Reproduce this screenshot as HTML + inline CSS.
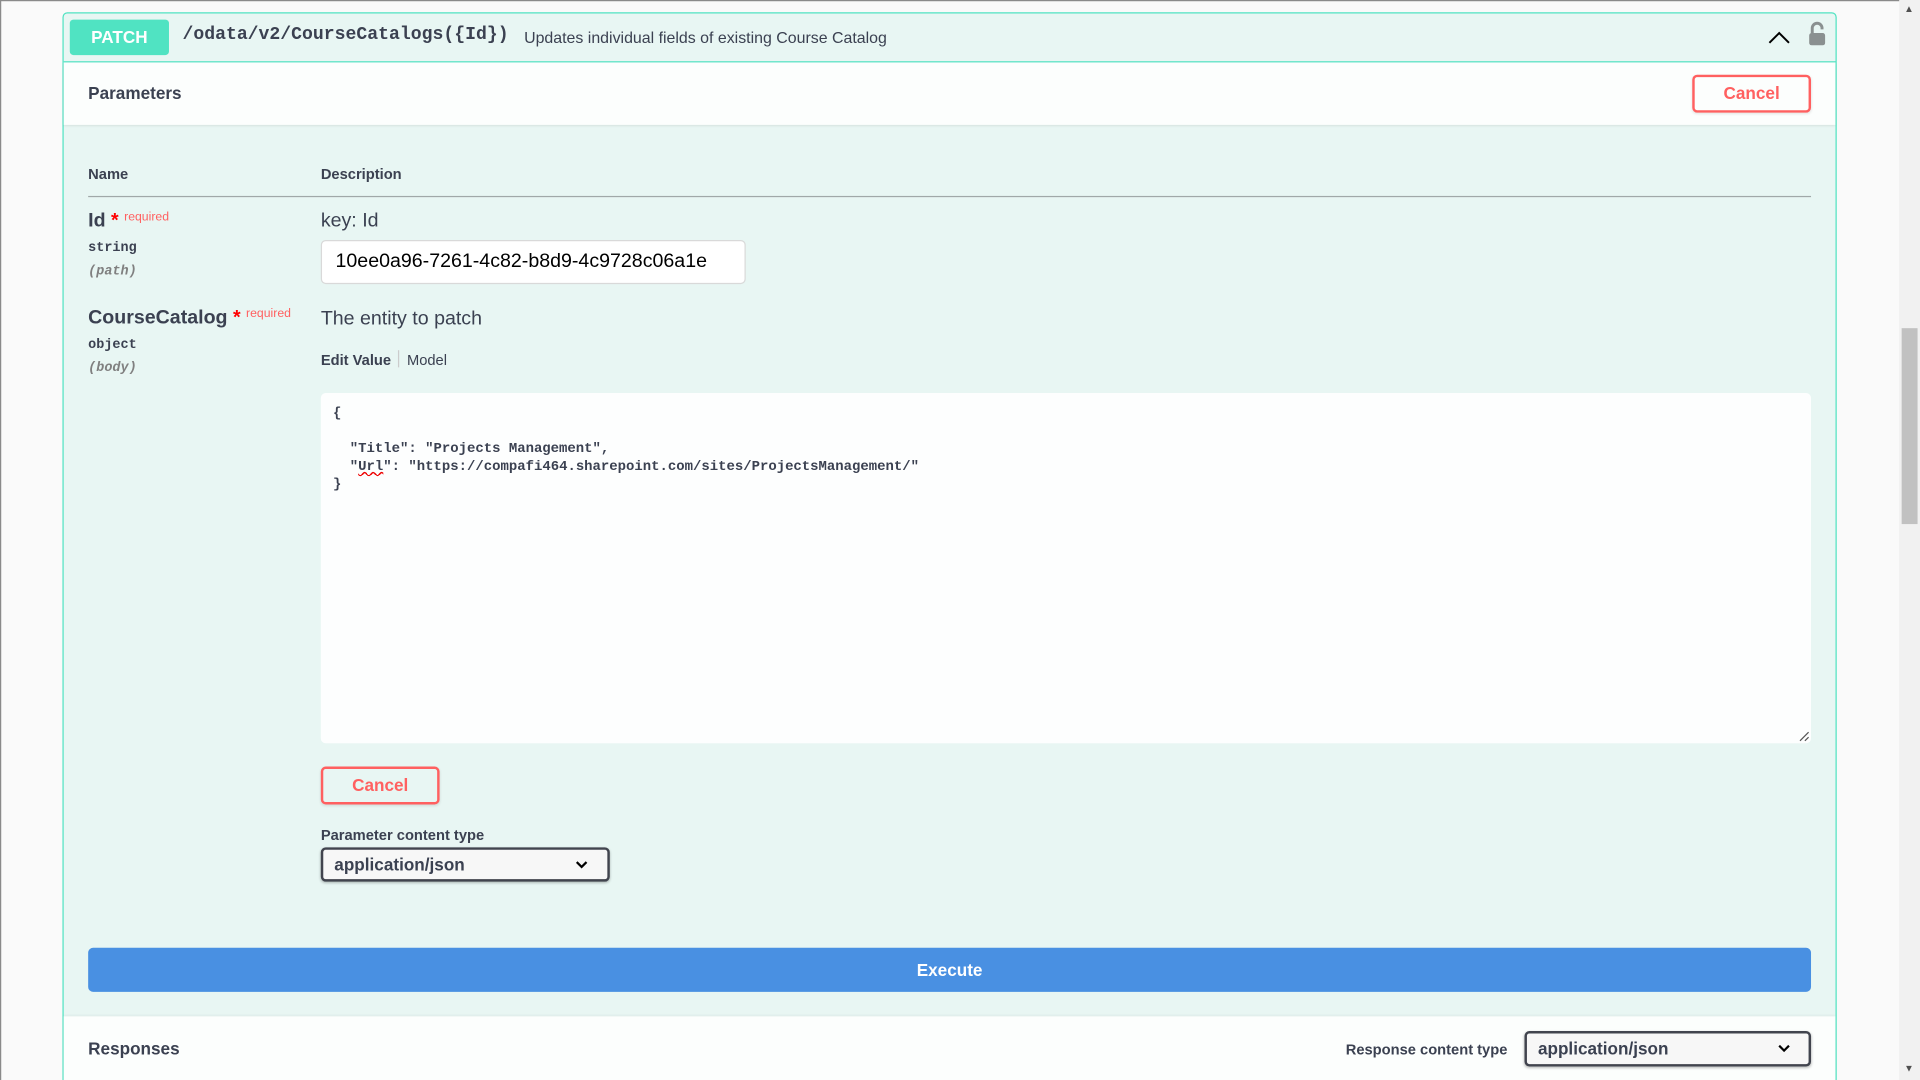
<!DOCTYPE html>
<html><head><meta charset="utf-8"><style>
html,body{margin:0;padding:0;width:1920px;height:1080px;overflow:hidden;background:#fafafa}
#w{position:absolute;left:0;top:0;width:1568px;height:882px;overflow:hidden;transform:scale(1.22449);transform-origin:0 0;font-family:"Liberation Sans",sans-serif;color:#3b4151}
.a{position:absolute}
.mono{font-family:"Liberation Mono","DejaVu Sans Mono",monospace}
.btnc{position:absolute;border:2px solid #ff6060;border-radius:4px;color:#ff6060;font-weight:bold;font-size:14px;text-align:center;box-sizing:border-box;background:transparent;box-shadow:0 1px 2px rgba(0,0,0,.1)}
.sel{position:absolute;box-sizing:border-box;border:2px solid #41444e;border-radius:4px;background:#f7f7f7;font-weight:bold;font-size:14px;padding-left:9px;box-shadow:0 1px 2px rgba(0,0,0,.25)}
.ast{color:#f00;font-size:16px}
</style></head><body><div id="w">
<div class="a" style="left:0;top:0;width:1568px;height:1px;background:#8a8a8a"></div>
<div class="a" style="left:0;top:0;width:1px;height:882px;background:#8a8a8a"></div>
<div class="a" style="left:1551px;top:0;width:17px;height:882px;background:#f1f1f1"></div>
<div class="a" style="left:1553px;top:268px;width:13px;height:160px;background:#c1c1c1"></div>
<div class="a" style="left:1555px;top:3px;font-size:8px;color:#505050">▲</div>
<div class="a" style="left:1555px;top:868px;font-size:8px;color:#505050">▼</div>

<div class="a" style="left:51px;top:10px;width:1447px;height:900px;border:1px solid #50e3c2;border-radius:4px;background:#e8f6f3"></div>
<div class="a" style="left:52px;top:50px;width:1447px;height:1px;background:#50e3c2"></div>
<div class="a" style="left:57px;top:16px;width:81px;height:29px;background:#50e3c2;border-radius:3px;color:#fff;font-weight:bold;font-size:14px;line-height:29px;text-align:center">PATCH</div>
<div class="a mono" style="left:149px;top:21px;font-size:14.8px;font-weight:bold;color:#3b4151">/odata/v2/CourseCatalogs({Id})</div>
<div class="a" style="left:428px;top:23px;font-size:13px;color:#3b4151">Updates individual fields of existing Course Catalog</div>
<svg class="a" style="left:1443px;top:23px" width="20" height="14"><path d="M2 12 L10 4 L18 12" fill="none" stroke="#000" stroke-width="1.6"/></svg>
<svg class="a" style="left:1476px;top:17px" width="16" height="22"><path d="M4 10 V6 a4 4 0 0 1 8 0 V7" fill="none" stroke="#8a9090" stroke-width="2.4"/><rect x="1.5" y="10" width="13" height="10" rx="2" fill="#8a9090"/></svg>

<div class="a" style="left:52px;top:51px;width:1447px;height:51px;background:#fcfefd;box-shadow:0 1px 2px rgba(0,0,0,.1)"></div>
<div class="a" style="left:72px;top:68px;font-size:14px;font-weight:bold">Parameters</div>
<div class="btnc" style="left:1382px;top:61px;width:97px;height:31px;line-height:27px">Cancel</div>

<div class="a" style="left:72px;top:135px;font-size:12px;font-weight:bold">Name</div>
<div class="a" style="left:262px;top:135px;font-size:12px;font-weight:bold">Description</div>
<div class="a" style="left:72px;top:160px;width:1407px;height:1px;background:#a0a8a8"></div>

<div class="a" style="left:72px;top:172px;font-size:16px;font-weight:bold">Id <span class="ast">*</span> <span style="color:#ff6060;font-size:10px;font-weight:normal;vertical-align:5px">required</span></div>
<div class="a mono" style="left:72px;top:197px;font-size:11px;font-weight:bold">string</div>
<div class="a mono" style="left:72px;top:216px;font-size:11px;font-style:italic;color:#808080;font-weight:bold">(path)</div>
<div class="a" style="left:262px;top:172px;font-size:16px">key: Id</div>
<div class="a" style="left:262px;top:196px;width:347px;height:36px;box-sizing:border-box;border:1px solid #d9d9d9;border-radius:4px;background:#fff;font-size:16px;line-height:34px;padding-left:11px;color:#000">10ee0a96-7261-4c82-b8d9-4c9728c06a1e</div>

<div class="a" style="left:72px;top:251px;font-size:16px;font-weight:bold">CourseCatalog <span class="ast">*</span> <span style="color:#ff6060;font-size:10px;font-weight:normal;vertical-align:5px">required</span></div>
<div class="a mono" style="left:72px;top:276px;font-size:11px;font-weight:bold">object</div>
<div class="a mono" style="left:72px;top:295px;font-size:11px;font-style:italic;color:#808080;font-weight:bold">(body)</div>
<div class="a" style="left:262px;top:252px;font-size:16px">The entity to patch</div>
<div class="a" style="left:262px;top:286px;font-size:12px"><b>Edit Value</b><span style="display:inline-block;width:1px;height:14px;background:#ccc;margin:0 6px;vertical-align:-2px"></span>Model</div>

<div class="a" style="left:262px;top:321px;width:1217px;height:286px;background:#fdfefe;border-radius:4px"></div>
<pre class="a mono" style="left:272px;top:331px;margin:0;font-size:11.4px;line-height:14.5px;font-weight:bold;color:#3b4151">{

  "Title": "Projects Management",
  "<span style="text-decoration:underline wavy #e00">Url</span>": "https://compafi464.sharepoint.com/sites/ProjectsManagement/"
}</pre>
<svg class="a" style="left:1468px;top:596px" width="10" height="10"><path d="M2 9 L9 2 M6 9 L9 6" stroke="#555" stroke-width="1"/></svg>

<div class="btnc" style="left:262px;top:626px;width:97px;height:31px;line-height:27px">Cancel</div>
<div class="a" style="left:262px;top:675px;font-size:12px;font-weight:bold">Parameter content type</div>
<div class="sel" style="left:262px;top:692px;width:236px;height:28px;line-height:24px">application/json</div>
<svg class="a" style="left:469px;top:701px" width="12" height="10"><path d="M2 3 L6 7 L10 3" fill="none" stroke="#000" stroke-width="1.8"/></svg>

<div class="a" style="left:72px;top:774px;width:1407px;height:36px;background:#4990e2;border-radius:4px;color:#fff;font-weight:bold;font-size:14px;line-height:36px;text-align:center">Execute</div>

<div class="a" style="left:52px;top:830px;width:1447px;height:60px;background:#fcfefd;box-shadow:0 -1px 2px rgba(0,0,0,.05)"></div>
<div class="a" style="left:72px;top:848px;font-size:14px;font-weight:bold">Responses</div>
<div class="a" style="left:1099px;top:850px;font-size:12px;font-weight:bold">Response content type</div>
<div class="sel" style="left:1245px;top:842px;width:234px;height:29px;line-height:25px">application/json</div>
<svg class="a" style="left:1451px;top:851px" width="12" height="10"><path d="M2 3 L6 7 L10 3" fill="none" stroke="#000" stroke-width="1.8"/></svg>
</div></body></html>
